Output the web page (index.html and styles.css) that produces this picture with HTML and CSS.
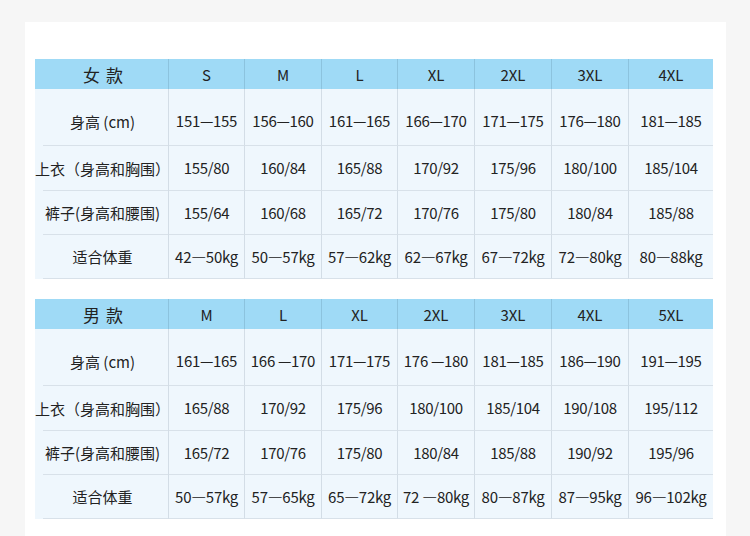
FILE: index.html
```html
<!DOCTYPE html>
<html lang="zh-CN">
<head>
<meta charset="utf-8">
<title>尺码表</title>
<link rel="stylesheet" href="styles.css">
</head>
<body>
<div class="card">
  <div class="size-table">
    <div class="hd first">女 款</div><div class="hd">S</div><div class="hd">M</div><div class="hd">L</div><div class="hd">XL</div><div class="hd">2XL</div><div class="hd">3XL</div><div class="hd last">4XL</div>

    <div class="c first tall">身高 (cm)</div><div class="c tall">151—155</div><div class="c tall">156—160</div><div class="c tall">161—165</div><div class="c tall">166—170</div><div class="c tall">171—175</div><div class="c tall">176—180</div><div class="c tall last">181—185</div>

    <div class="c first">上衣（身高和胸围）</div><div class="c">155/80</div><div class="c">160/84</div><div class="c">165/88</div><div class="c">170/92</div><div class="c">175/96</div><div class="c">180/100</div><div class="c last">185/104</div>

    <div class="c first">裤子(身高和腰围)</div><div class="c">155/64</div><div class="c">160/68</div><div class="c">165/72</div><div class="c">170/76</div><div class="c">175/80</div><div class="c">180/84</div><div class="c last">185/88</div>

    <div class="c first">适合体重</div><div class="c">42—50kg</div><div class="c">50—57kg</div><div class="c">57—62kg</div><div class="c">62—67kg</div><div class="c">67—72kg</div><div class="c">72—80kg</div><div class="c last">80—88kg</div>
  </div>

  <div class="size-table">
    <div class="hd first">男 款</div><div class="hd">M</div><div class="hd">L</div><div class="hd">XL</div><div class="hd">2XL</div><div class="hd">3XL</div><div class="hd">4XL</div><div class="hd last">5XL</div>

    <div class="c first tall">身高 (cm)</div><div class="c tall">161—165</div><div class="c tall">166 —170</div><div class="c tall">171—175</div><div class="c tall">176 —180</div><div class="c tall">181—185</div><div class="c tall">186—190</div><div class="c tall last">191—195</div>

    <div class="c first">上衣（身高和胸围）</div><div class="c">165/88</div><div class="c">170/92</div><div class="c">175/96</div><div class="c">180/100</div><div class="c">185/104</div><div class="c">190/108</div><div class="c last">195/112</div>

    <div class="c first">裤子(身高和腰围)</div><div class="c">165/72</div><div class="c">170/76</div><div class="c">175/80</div><div class="c">180/84</div><div class="c">185/88</div><div class="c">190/92</div><div class="c last">195/96</div>

    <div class="c first">适合体重</div><div class="c">50—57kg</div><div class="c">57—65kg</div><div class="c">65—72kg</div><div class="c">72 —80kg</div><div class="c">80—87kg</div><div class="c">87—95kg</div><div class="c last">96—102kg</div>
  </div>
</div>
</body>
</html>
```

FILE: styles.css
```css
* { box-sizing: border-box; }

html, body {
  margin: 0;
  padding: 0;
  background: #f6f6f6;
  font-family: "Noto Sans CJK SC", "Noto Sans", sans-serif;
  color: #222;
}

.card {
  margin: 22px 0 0 25px;
  width: 701px;
  min-height: 520px;
  background: #ffffff;
  padding: 37px 14px 0 10px;
  display: flex;
  flex-direction: column;
  gap: 20px;
}

.size-table {
  display: grid;
  grid-template-columns: 134px 76px 77px 76px 77px 77px 77px 84px;
  grid-template-rows: 30px 57px 45px 44px 44px;
  width: 678px;
  background: #eff7fd;
}

.hd {
  background: #9fdaf6;
  border-right: 1px solid #8cc3de;
  display: flex;
  align-items: center;
  justify-content: center;
  font-size: 15px;
  white-space: nowrap;
}

.hd.first {
  font-size: 17px;
  letter-spacing: 1px;
  padding-left: 4px;
}

.c {
  border-right: 1px solid #d3dde6;
  border-bottom: 1px solid #d8e1e9;
  display: flex;
  align-items: center;
  justify-content: center;
  font-size: 15px;
  letter-spacing: -0.3px;
  white-space: nowrap;
  padding-bottom: 1px;
}

.c.first {
  border-bottom: none;
  background: linear-gradient(#d8e1e9, #d8e1e9) 8px 100% / calc(100% - 8px) 1px no-repeat;
  letter-spacing: 0;
  padding-left: 2px;
}

.c.tall {
  padding-top: 8px;
}

.last {
  border-right: none;
}
```
